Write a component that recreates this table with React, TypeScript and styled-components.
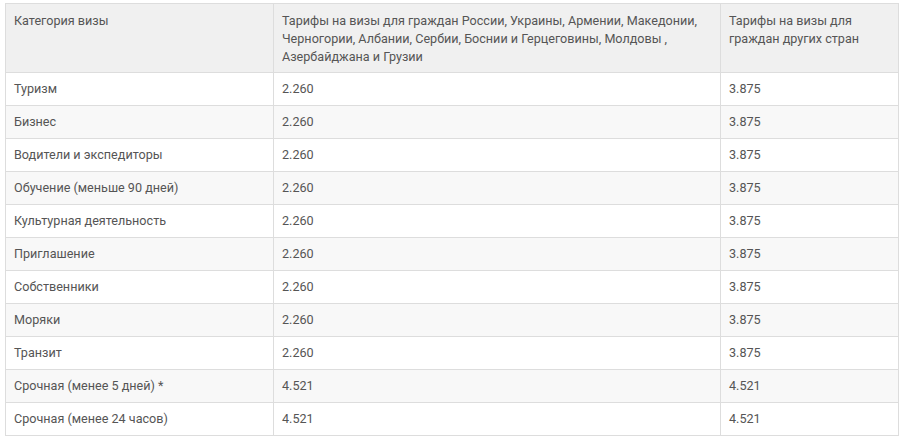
import styled, { createGlobalStyle } from "styled-components";

const GlobalStyle = createGlobalStyle`
  body {
    margin: 0;
    background: #ffffff;
    font-family: Roboto, "Liberation Sans", Arial, sans-serif;
  }
`;

const rows: [string, string, string][] = [
  ["Туризм", "2.260", "3.875"],
  ["Бизнес", "2.260", "3.875"],
  ["Водители и экспедиторы", "2.260", "3.875"],
  ["Обучение (меньше 90 дней)", "2.260", "3.875"],
  ["Культурная деятельность", "2.260", "3.875"],
  ["Приглашение", "2.260", "3.875"],
  ["Собственники", "2.260", "3.875"],
  ["Моряки", "2.260", "3.875"],
  ["Транзит", "2.260", "3.875"],
  ["Срочная (менее 5 дней) *", "4.521", "4.521"],
  ["Срочная (менее 24 часов)", "4.521", "4.521"],
];

const App = () => {
  return (
    <Root>
      <GlobalStyle />
      <Table>
        <colgroup>
          <col style={{ width: 268 }} />
          <col style={{ width: 447 }} />
          <col style={{ width: 178 }} />
        </colgroup>
        <thead>
          <tr>
            <HeadCell>Категория визы</HeadCell>
            <HeadCell>
              Тарифы на визы для граждан России, Украины, Армении, Македонии,
              Черногории, Албании, Сербии, Боснии и Герцеговины, Молдовы ,
              Азербайджана и Грузии
            </HeadCell>
            <HeadCell>Тарифы на визы для граждан других стран</HeadCell>
          </tr>
        </thead>
        <tbody>
          {rows.map(([name, local, other], i) => (
            <Row key={name} $striped={i % 2 === 1}>
              <Cell>{name}</Cell>
              <Cell>{local}</Cell>
              <Cell>{other}</Cell>
            </Row>
          ))}
        </tbody>
      </Table>
    </Root>
  );
};

const Root = styled.div`
  padding: 3px 8px 0 5px;
`;

const Table = styled.table`
  width: 893px;
  border-collapse: collapse;
  table-layout: fixed;
  font-size: 12.6px;
  color: #555555;
`;

const HeadCell = styled.th`
  background-color: #f0f0f0;
  border: 1px solid #dddddd;
  padding: 8px 8px 6px;
  line-height: 18px;
  font-weight: normal;
  text-align: left;
  vertical-align: top;
`;

const Row = styled.tr<{ $striped: boolean }>`
  background-color: ${(p) => (p.$striped ? "#f8f8f8" : "#ffffff")};
`;

const Cell = styled.td`
  border: 1px solid #dddddd;
  padding: 8px 8px;
  line-height: 16px;
  height: 16px;
  vertical-align: middle;
`;

export default App;
